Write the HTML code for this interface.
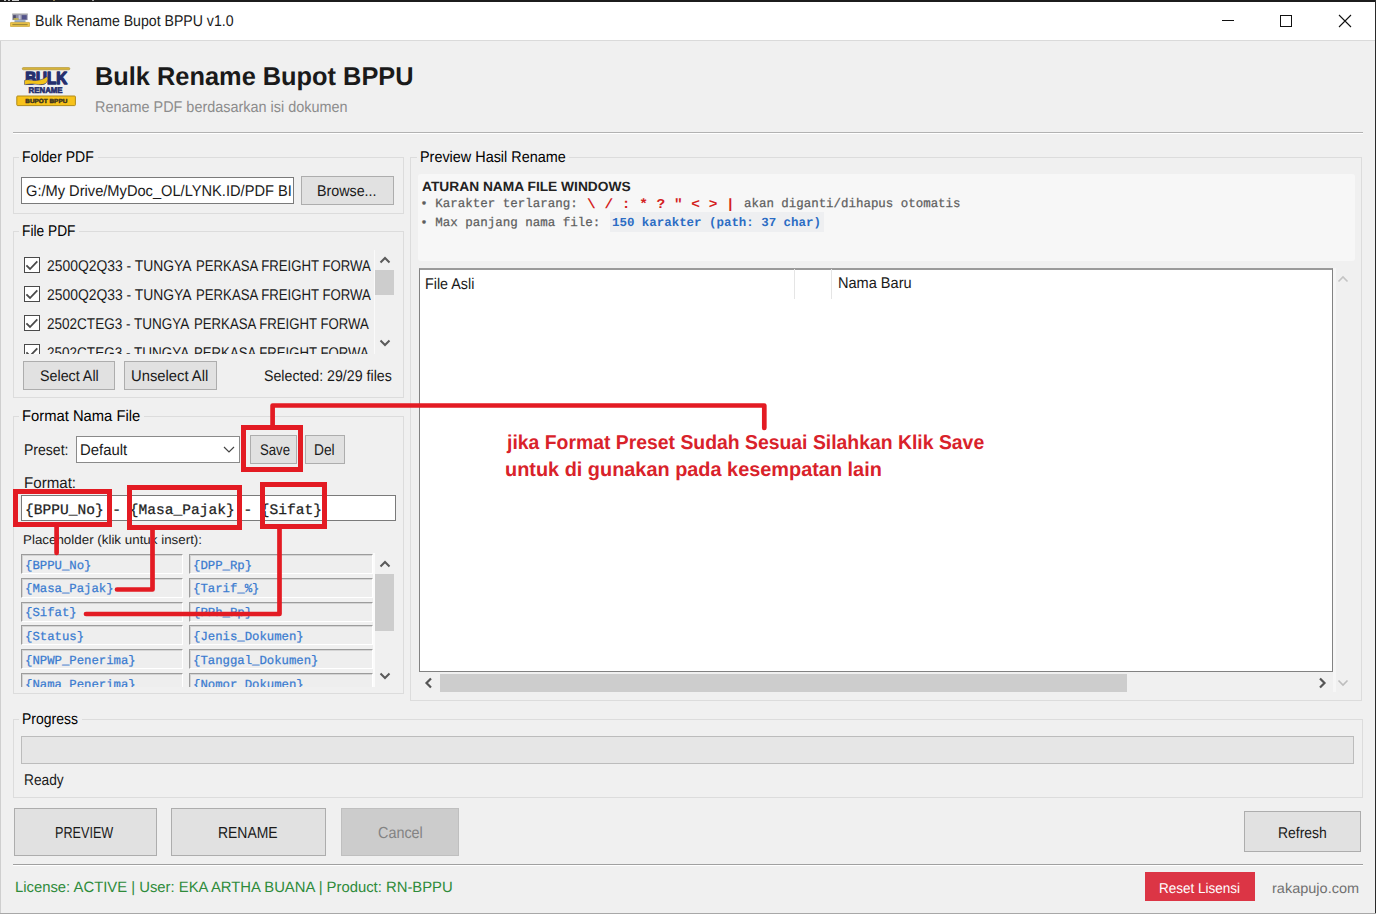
<!DOCTYPE html>
<html><head><meta charset="utf-8"><title>Bulk Rename Bupot BPPU v1.0</title>
<style>
html,body{margin:0;padding:0;}
body{width:1376px;height:914px;position:relative;overflow:hidden;background:#f0f0f0;font-family:'Liberation Sans',sans-serif;text-rendering:geometricPrecision;}
</style></head><body>
<div style="position:absolute;left:0px;top:0px;width:1376px;height:2px;background:#1c1c1c"></div>
<div style="position:absolute;left:4px;top:0px;width:2px;height:1px;background:#bdbdbd"></div>
<div style="position:absolute;left:8px;top:0px;width:2px;height:1px;background:#bdbdbd"></div>
<div style="position:absolute;left:12px;top:0px;width:7px;height:1px;background:#d0d0d0"></div>
<div style="position:absolute;left:53px;top:0px;width:2px;height:1px;background:#8a7a50"></div>
<div style="position:absolute;left:92px;top:0px;width:2px;height:1px;background:#9a9a9a"></div>
<div style="position:absolute;left:0px;top:2px;width:1376px;height:38px;background:#fff"></div>
<div style="position:absolute;left:0px;top:40px;width:1376px;height:1px;background:#dadada"></div>
<div style="position:absolute;left:0px;top:41px;width:1px;height:873px;background:#cfcfcf"></div>
<div style="position:absolute;left:1375px;top:0px;width:1px;height:914px;background:#2a2a2a"></div>
<div style="position:absolute;left:0px;top:913px;width:1376px;height:1px;background:#a8a8a8"></div>
<div style="position:absolute;left:35.09px;top:12px;font:normal 15.5px/20px 'Liberation Sans', sans-serif;color:#1a1a1a;white-space:nowrap"><span style="display:inline-block;transform:scale(0.9109,1.000);transform-origin:0 0;">Bulk Rename Bupot BPPU v1.0</span></div>
<div style="position:absolute;left:1222px;top:20px;width:12px;height:1px;background:#111"></div>
<div style="position:absolute;left:1280px;top:15px;width:10px;height:10px;border:1px solid #111"></div>
<svg style="position:absolute;left:1338px;top:14px" width="14" height="14" viewBox="0 0 14 14"><path d="M1 1 L13 13 M13 1 L1 13" stroke="#111" stroke-width="1.1"/></svg>
<div style="position:absolute;left:95.42px;top:60px;font:bold 25.8px/34px 'Liberation Sans', sans-serif;color:#1a1a1a;white-space:nowrap"><span style="display:inline-block;transform:scale(0.9835,1.000);transform-origin:0 0;">Bulk Rename Bupot BPPU</span></div>
<div style="position:absolute;left:95.07px;top:98px;font:normal 15.5px/20px 'Liberation Sans', sans-serif;color:#8c8c8c;white-space:nowrap"><span style="display:inline-block;transform:scale(0.9305,1.000);transform-origin:0 0;">Rename PDF berdasarkan isi dokumen</span></div>
<div style="position:absolute;left:13px;top:132px;width:1350px;height:1px;background:#b2b2b2"></div>
<div style="position:absolute;left:13px;top:133px;width:1350px;height:1px;background:#fff"></div>
<div style="position:absolute;left:13px;top:157px;width:391px;height:57px;border:1px solid #dcdcdc;box-sizing:border-box"></div>
<div style="position:absolute;left:19px;top:155px;width:78.5px;height:5px;background:#f0f0f0"></div>
<div style="position:absolute;left:22.09px;top:148px;font:normal 15.5px/20px 'Liberation Sans', sans-serif;color:#000;white-space:nowrap"><span style="display:inline-block;transform:scale(0.9065,1.000);transform-origin:0 0;">Folder PDF</span></div>
<div style="position:absolute;left:21px;top:177px;width:273px;height:27px;background:#fff;border:1px solid #7a7a7a;box-sizing:border-box"></div>
<div style="position:absolute;left:25.70px;top:182px;font:normal 15.5px/20px 'Liberation Sans', sans-serif;color:#1a1a1a;white-space:nowrap"><span style="display:inline-block;transform:scale(0.9449,1.000);transform-origin:0 0;">G:/My Drive/MyDoc_OL/LYNK.ID/PDF BI</span></div>
<div style="position:absolute;left:301px;top:176px;width:93px;height:29px;background:#e1e1e1;border:1px solid #adadad;box-sizing:border-box"></div>
<div style="position:absolute;left:317.38px;top:182px;font:normal 15.5px/20px 'Liberation Sans', sans-serif;color:#1a1a1a;white-space:nowrap"><span style="display:inline-block;transform:scale(0.9214,1.000);transform-origin:0 0;">Browse...</span></div>
<div style="position:absolute;left:13px;top:231px;width:391px;height:167px;border:1px solid #dcdcdc;box-sizing:border-box"></div>
<div style="position:absolute;left:18.8px;top:229px;width:60.2px;height:5px;background:#f0f0f0"></div>
<div style="position:absolute;left:21.91px;top:222px;font:normal 15.5px/20px 'Liberation Sans', sans-serif;color:#000;white-space:nowrap"><span style="display:inline-block;transform:scale(0.8875,1.000);transform-origin:0 0;">File PDF</span></div>
<div style="position:absolute;left:20px;top:250px;width:351px;height:104px;overflow:hidden">
<div style="position:absolute;left:4px;top:7px;width:16px;height:16px;box-sizing:border-box;border:1.4px solid #4a4a4a;background:#fff"></div>
<svg style="position:absolute;left:4px;top:7px" width="16" height="16" viewBox="0 0 16 16"><path d="M2.4 8.4 L6 12 L13.3 4.4" fill="none" stroke="#4a4a4a" stroke-width="1.8"/></svg>
<div style="position:absolute;left:26.50px;top:7px;font:normal 15.5px/20px 'Liberation Sans', sans-serif;color:#1a1a1a;white-space:nowrap"><span style="display:inline-block;transform:scale(0.8957,1.000);transform-origin:0 0;">2500Q2Q33 - TUNGYA</span></div>
<div style="position:absolute;left:176.05px;top:7px;font:normal 15.5px/20px 'Liberation Sans', sans-serif;color:#1a1a1a;white-space:nowrap"><span style="display:inline-block;transform:scale(0.8505,1.000);transform-origin:0 0;">PERKASA FREIGHT FORWA</span></div>
<div style="position:absolute;left:4px;top:36px;width:16px;height:16px;box-sizing:border-box;border:1.4px solid #4a4a4a;background:#fff"></div>
<svg style="position:absolute;left:4px;top:36px" width="16" height="16" viewBox="0 0 16 16"><path d="M2.4 8.4 L6 12 L13.3 4.4" fill="none" stroke="#4a4a4a" stroke-width="1.8"/></svg>
<div style="position:absolute;left:26.50px;top:36px;font:normal 15.5px/20px 'Liberation Sans', sans-serif;color:#1a1a1a;white-space:nowrap"><span style="display:inline-block;transform:scale(0.8957,1.000);transform-origin:0 0;">2500Q2Q33 - TUNGYA</span></div>
<div style="position:absolute;left:176.05px;top:36px;font:normal 15.5px/20px 'Liberation Sans', sans-serif;color:#1a1a1a;white-space:nowrap"><span style="display:inline-block;transform:scale(0.8505,1.000);transform-origin:0 0;">PERKASA FREIGHT FORWA</span></div>
<div style="position:absolute;left:4px;top:65px;width:16px;height:16px;box-sizing:border-box;border:1.4px solid #4a4a4a;background:#fff"></div>
<svg style="position:absolute;left:4px;top:65px" width="16" height="16" viewBox="0 0 16 16"><path d="M2.4 8.4 L6 12 L13.3 4.4" fill="none" stroke="#4a4a4a" stroke-width="1.8"/></svg>
<div style="position:absolute;left:26.50px;top:65px;font:normal 15.5px/20px 'Liberation Sans', sans-serif;color:#1a1a1a;white-space:nowrap"><span style="display:inline-block;transform:scale(0.8730,1.000);transform-origin:0 0;">2502CTEG3 - TUNGYA</span></div>
<div style="position:absolute;left:173.75px;top:65px;font:normal 15.5px/20px 'Liberation Sans', sans-serif;color:#1a1a1a;white-space:nowrap"><span style="display:inline-block;transform:scale(0.8505,1.000);transform-origin:0 0;">PERKASA FREIGHT FORWA</span></div>
<div style="position:absolute;left:4px;top:94px;width:16px;height:16px;box-sizing:border-box;border:1.4px solid #4a4a4a;background:#fff"></div>
<svg style="position:absolute;left:4px;top:94px" width="16" height="16" viewBox="0 0 16 16"><path d="M2.4 8.4 L6 12 L13.3 4.4" fill="none" stroke="#4a4a4a" stroke-width="1.8"/></svg>
<div style="position:absolute;left:26.50px;top:94px;font:normal 15.5px/20px 'Liberation Sans', sans-serif;color:#1a1a1a;white-space:nowrap"><span style="display:inline-block;transform:scale(0.8730,1.000);transform-origin:0 0;">2502CTEG3 - TUNGYA</span></div>
<div style="position:absolute;left:173.75px;top:94px;font:normal 15.5px/20px 'Liberation Sans', sans-serif;color:#1a1a1a;white-space:nowrap"><span style="display:inline-block;transform:scale(0.8505,1.000);transform-origin:0 0;">PERKASA FREIGHT FORWA</span></div>
</div>
<div style="position:absolute;left:374px;top:250px;width:1px;height:104px;background:#fafafa"></div>
<svg style="position:absolute;left:379px;top:255px" width="12" height="10" viewBox="0 0 12 10"><path d="M1.5 7.5 L6 3 L10.5 7.5" fill="none" stroke="#5a5a5a" stroke-width="2"/></svg>
<div style="position:absolute;left:375px;top:270px;width:19px;height:25px;background:#cdcdcd"></div>
<svg style="position:absolute;left:379px;top:338px" width="12" height="10" viewBox="0 0 12 10"><path d="M1.5 2.5 L6 7 L10.5 2.5" fill="none" stroke="#5a5a5a" stroke-width="2"/></svg>
<div style="position:absolute;left:23px;top:361px;width:92px;height:29px;background:#e1e1e1;border:1px solid #adadad;box-sizing:border-box"></div>
<div style="position:absolute;left:39.60px;top:367px;font:normal 15.5px/20px 'Liberation Sans', sans-serif;color:#1a1a1a;white-space:nowrap"><span style="display:inline-block;transform:scale(0.9210,1.000);transform-origin:0 0;">Select All</span></div>
<div style="position:absolute;left:124px;top:361px;width:93px;height:29px;background:#e1e1e1;border:1px solid #adadad;box-sizing:border-box"></div>
<div style="position:absolute;left:130.85px;top:367px;font:normal 15.5px/20px 'Liberation Sans', sans-serif;color:#1a1a1a;white-space:nowrap"><span style="display:inline-block;transform:scale(0.9541,1.000);transform-origin:0 0;">Unselect All</span></div>
<div style="position:absolute;left:264.30px;top:367px;font:normal 15.5px/20px 'Liberation Sans', sans-serif;color:#1a1a1a;white-space:nowrap"><span style="display:inline-block;transform:scale(0.9153,1.000);transform-origin:0 0;">Selected: 29/29 files</span></div>
<div style="position:absolute;left:13px;top:416px;width:391px;height:278px;border:1px solid #dcdcdc;box-sizing:border-box"></div>
<div style="position:absolute;left:19.3px;top:414px;width:124.7px;height:5px;background:#f0f0f0"></div>
<div style="position:absolute;left:22.35px;top:407px;font:normal 15.5px/20px 'Liberation Sans', sans-serif;color:#000;white-space:nowrap"><span style="display:inline-block;transform:scale(0.9534,1.000);transform-origin:0 0;">Format Nama File</span></div>
<div style="position:absolute;left:23.59px;top:441px;font:normal 15.5px/20px 'Liberation Sans', sans-serif;color:#1a1a1a;white-space:nowrap"><span style="display:inline-block;transform:scale(0.9060,1.000);transform-origin:0 0;">Preset:</span></div>
<div style="position:absolute;left:76px;top:436px;width:164px;height:27px;background:#fff;border:1px solid #8a8a8a;box-sizing:border-box"></div>
<div style="position:absolute;left:79.64px;top:441px;font:normal 15.5px/20px 'Liberation Sans', sans-serif;color:#1a1a1a;white-space:nowrap"><span style="display:inline-block;transform:scale(0.9589,1.000);transform-origin:0 0;">Default</span></div>
<svg style="position:absolute;left:222px;top:444px" width="14" height="12" viewBox="0 0 14 12"><path d="M2 3 L7 8 L12 3" fill="none" stroke="#444" stroke-width="1.2"/></svg>
<div style="position:absolute;left:250px;top:435px;width:47px;height:29px;background:#e1e1e1;border:1px solid #adadad;box-sizing:border-box"></div>
<div style="position:absolute;left:259.50px;top:441px;font:normal 15.5px/20px 'Liberation Sans', sans-serif;color:#1a1a1a;white-space:nowrap"><span style="display:inline-block;transform:scale(0.8499,1.000);transform-origin:0 0;">Save</span></div>
<div style="position:absolute;left:305px;top:435px;width:40px;height:29px;background:#e1e1e1;border:1px solid #adadad;box-sizing:border-box"></div>
<div style="position:absolute;left:314.01px;top:441px;font:normal 15.5px/20px 'Liberation Sans', sans-serif;color:#1a1a1a;white-space:nowrap"><span style="display:inline-block;transform:scale(0.8893,1.000);transform-origin:0 0;">Del</span></div>
<div style="position:absolute;left:23.53px;top:474px;font:normal 15.5px/20px 'Liberation Sans', sans-serif;color:#1a1a1a;white-space:nowrap"><span style="display:inline-block;transform:scale(0.9748,1.000);transform-origin:0 0;">Format:</span></div>
<div style="position:absolute;left:21px;top:495px;width:375px;height:26px;background:#fff;border:1px solid #7a7a7a;box-sizing:border-box"></div>
<div style="position:absolute;left:25.00px;top:502px;-webkit-text-stroke:0.25px currentColor;font:normal 14.5px/19px 'Liberation Mono', monospace;color:#222;white-space:nowrap"><span style="display:inline-block;transform:scale(1.0039,1.000);transform-origin:0 0;">{BPPU_No} - {Masa_Pajak} - {Sifat}</span></div>
<div style="position:absolute;left:23.36px;top:531px;font:normal 12.8px/17px 'Liberation Sans', sans-serif;color:#222;white-space:nowrap"><span style="display:inline-block;transform:scale(1.0444,1.000);transform-origin:0 0;">Placeholder (klik untuk insert):</span></div>
<div style="position:absolute;left:0px;top:550px;width:374px;height:137px;overflow:hidden">
<div style="position:absolute;left:21px;top:4.0px;width:162px;height:20px;box-sizing:border-box;background:#eeeeee;border-top:1px solid #9c9c9c;border-left:1px solid #9c9c9c;border-right:1px solid #fff;border-bottom:1px solid #fff;box-shadow:inset 1px 1px 0 #d4d4d4"></div>
<div style="position:absolute;left:25.00px;top:8px;-webkit-text-stroke:0.25px currentColor;font:normal 12.3px/16px 'Liberation Mono', monospace;color:#3a7bd0;white-space:nowrap"><span style="display:inline-block;">{BPPU_No}</span></div>
<div style="position:absolute;left:189px;top:4.0px;width:184px;height:20px;box-sizing:border-box;background:#eeeeee;border-top:1px solid #9c9c9c;border-left:1px solid #9c9c9c;border-right:1px solid #fff;border-bottom:1px solid #fff;box-shadow:inset 1px 1px 0 #d4d4d4"></div>
<div style="position:absolute;left:193.00px;top:8px;-webkit-text-stroke:0.25px currentColor;font:normal 12.3px/16px 'Liberation Mono', monospace;color:#3a7bd0;white-space:nowrap"><span style="display:inline-block;">{DPP_Rp}</span></div>
<div style="position:absolute;left:21px;top:27.8px;width:162px;height:20px;box-sizing:border-box;background:#eeeeee;border-top:1px solid #9c9c9c;border-left:1px solid #9c9c9c;border-right:1px solid #fff;border-bottom:1px solid #fff;box-shadow:inset 1px 1px 0 #d4d4d4"></div>
<div style="position:absolute;left:25.00px;top:31px;-webkit-text-stroke:0.25px currentColor;font:normal 12.3px/16px 'Liberation Mono', monospace;color:#3a7bd0;white-space:nowrap"><span style="display:inline-block;">{Masa_Pajak}</span></div>
<div style="position:absolute;left:189px;top:27.8px;width:184px;height:20px;box-sizing:border-box;background:#eeeeee;border-top:1px solid #9c9c9c;border-left:1px solid #9c9c9c;border-right:1px solid #fff;border-bottom:1px solid #fff;box-shadow:inset 1px 1px 0 #d4d4d4"></div>
<div style="position:absolute;left:193.00px;top:31px;-webkit-text-stroke:0.25px currentColor;font:normal 12.3px/16px 'Liberation Mono', monospace;color:#3a7bd0;white-space:nowrap"><span style="display:inline-block;">{Tarif_%}</span></div>
<div style="position:absolute;left:21px;top:51.6px;width:162px;height:20px;box-sizing:border-box;background:#eeeeee;border-top:1px solid #9c9c9c;border-left:1px solid #9c9c9c;border-right:1px solid #fff;border-bottom:1px solid #fff;box-shadow:inset 1px 1px 0 #d4d4d4"></div>
<div style="position:absolute;left:25.00px;top:55px;-webkit-text-stroke:0.25px currentColor;font:normal 12.3px/16px 'Liberation Mono', monospace;color:#3a7bd0;white-space:nowrap"><span style="display:inline-block;">{Sifat}</span></div>
<div style="position:absolute;left:189px;top:51.6px;width:184px;height:20px;box-sizing:border-box;background:#eeeeee;border-top:1px solid #9c9c9c;border-left:1px solid #9c9c9c;border-right:1px solid #fff;border-bottom:1px solid #fff;box-shadow:inset 1px 1px 0 #d4d4d4"></div>
<div style="position:absolute;left:193.00px;top:55px;-webkit-text-stroke:0.25px currentColor;font:normal 12.3px/16px 'Liberation Mono', monospace;color:#3a7bd0;white-space:nowrap"><span style="display:inline-block;">{PPh_Rp}</span></div>
<div style="position:absolute;left:21px;top:75.4px;width:162px;height:20px;box-sizing:border-box;background:#eeeeee;border-top:1px solid #9c9c9c;border-left:1px solid #9c9c9c;border-right:1px solid #fff;border-bottom:1px solid #fff;box-shadow:inset 1px 1px 0 #d4d4d4"></div>
<div style="position:absolute;left:25.00px;top:79px;-webkit-text-stroke:0.25px currentColor;font:normal 12.3px/16px 'Liberation Mono', monospace;color:#3a7bd0;white-space:nowrap"><span style="display:inline-block;">{Status}</span></div>
<div style="position:absolute;left:189px;top:75.4px;width:184px;height:20px;box-sizing:border-box;background:#eeeeee;border-top:1px solid #9c9c9c;border-left:1px solid #9c9c9c;border-right:1px solid #fff;border-bottom:1px solid #fff;box-shadow:inset 1px 1px 0 #d4d4d4"></div>
<div style="position:absolute;left:193.00px;top:79px;-webkit-text-stroke:0.25px currentColor;font:normal 12.3px/16px 'Liberation Mono', monospace;color:#3a7bd0;white-space:nowrap"><span style="display:inline-block;">{Jenis_Dokumen}</span></div>
<div style="position:absolute;left:21px;top:99.2px;width:162px;height:20px;box-sizing:border-box;background:#eeeeee;border-top:1px solid #9c9c9c;border-left:1px solid #9c9c9c;border-right:1px solid #fff;border-bottom:1px solid #fff;box-shadow:inset 1px 1px 0 #d4d4d4"></div>
<div style="position:absolute;left:25.00px;top:103px;-webkit-text-stroke:0.25px currentColor;font:normal 12.3px/16px 'Liberation Mono', monospace;color:#3a7bd0;white-space:nowrap"><span style="display:inline-block;">{NPWP_Penerima}</span></div>
<div style="position:absolute;left:189px;top:99.2px;width:184px;height:20px;box-sizing:border-box;background:#eeeeee;border-top:1px solid #9c9c9c;border-left:1px solid #9c9c9c;border-right:1px solid #fff;border-bottom:1px solid #fff;box-shadow:inset 1px 1px 0 #d4d4d4"></div>
<div style="position:absolute;left:193.00px;top:103px;-webkit-text-stroke:0.25px currentColor;font:normal 12.3px/16px 'Liberation Mono', monospace;color:#3a7bd0;white-space:nowrap"><span style="display:inline-block;">{Tanggal_Dokumen}</span></div>
<div style="position:absolute;left:21px;top:123.0px;width:162px;height:20px;box-sizing:border-box;background:#eeeeee;border-top:1px solid #9c9c9c;border-left:1px solid #9c9c9c;border-right:1px solid #fff;border-bottom:1px solid #fff;box-shadow:inset 1px 1px 0 #d4d4d4"></div>
<div style="position:absolute;left:25.00px;top:127px;-webkit-text-stroke:0.25px currentColor;font:normal 12.3px/16px 'Liberation Mono', monospace;color:#3a7bd0;white-space:nowrap"><span style="display:inline-block;">{Nama_Penerima}</span></div>
<div style="position:absolute;left:189px;top:123.0px;width:184px;height:20px;box-sizing:border-box;background:#eeeeee;border-top:1px solid #9c9c9c;border-left:1px solid #9c9c9c;border-right:1px solid #fff;border-bottom:1px solid #fff;box-shadow:inset 1px 1px 0 #d4d4d4"></div>
<div style="position:absolute;left:193.00px;top:127px;-webkit-text-stroke:0.25px currentColor;font:normal 12.3px/16px 'Liberation Mono', monospace;color:#3a7bd0;white-space:nowrap"><span style="display:inline-block;">{Nomor_Dokumen}</span></div>
</div>
<div style="position:absolute;left:373px;top:553px;width:2px;height:134px;background:#fbfbfb"></div>
<svg style="position:absolute;left:379px;top:559px" width="12" height="10" viewBox="0 0 12 10"><path d="M1.5 7.5 L6 3 L10.5 7.5" fill="none" stroke="#5a5a5a" stroke-width="2"/></svg>
<div style="position:absolute;left:375px;top:574px;width:19px;height:57px;background:#cdcdcd"></div>
<svg style="position:absolute;left:379px;top:671px" width="12" height="10" viewBox="0 0 12 10"><path d="M1.5 2.5 L6 7 L10.5 2.5" fill="none" stroke="#5a5a5a" stroke-width="2"/></svg>
<div style="position:absolute;left:410px;top:157px;width:952px;height:544px;border:1px solid #dcdcdc;box-sizing:border-box"></div>
<div style="position:absolute;left:416.6px;top:155px;width:152.2px;height:5px;background:#f0f0f0"></div>
<div style="position:absolute;left:419.67px;top:148px;font:normal 15.5px/20px 'Liberation Sans', sans-serif;color:#000;white-space:nowrap"><span style="display:inline-block;transform:scale(0.9294,1.000);transform-origin:0 0;">Preview Hasil Rename</span></div>
<div style="position:absolute;left:418px;top:174px;width:937px;height:87px;background:#f7f7f7;border-radius:3px"></div>
<div style="position:absolute;left:421.50px;top:178px;font:bold 13.3px/17px 'Liberation Sans', sans-serif;color:#222;white-space:nowrap"><span style="display:inline-block;transform:scale(1.0348,1.000);transform-origin:0 0;">ATURAN NAMA FILE WINDOWS</span></div>
<div style="position:absolute;left:420.30px;top:196px;-webkit-text-stroke:0.25px currentColor;font:normal 12.5px/16px 'Liberation Mono', monospace;color:#5e5e5e;white-space:nowrap"><span style="display:inline-block;">• Karakter terlarang:</span></div>
<div style="position:absolute;left:587.30px;top:197px;font:bold 13.5px/18px 'Liberation Mono', monospace;color:#d42020;white-space:nowrap"><span style="display:inline-block;transform:scale(1.0726,1.000);transform-origin:0 0;">\ / : * ? " &lt; &gt; |</span></div>
<div style="position:absolute;left:743.50px;top:196px;-webkit-text-stroke:0.25px currentColor;font:normal 12.5px/16px 'Liberation Mono', monospace;color:#5e5e5e;white-space:nowrap"><span style="display:inline-block;transform:scale(0.9952,1.000);transform-origin:0 0;">akan diganti/dihapus otomatis</span></div>
<div style="position:absolute;left:420.30px;top:215px;-webkit-text-stroke:0.25px currentColor;font:normal 12.5px/16px 'Liberation Mono', monospace;color:#5e5e5e;white-space:nowrap"><span style="display:inline-block;">• Max panjang nama file:</span></div>
<div style="position:absolute;left:610px;top:212px;width:214px;height:20px;background:#eeeff1"></div>
<div style="position:absolute;left:612.30px;top:215px;font:bold 12.35px/16px 'Liberation Mono', monospace;color:#2b6cc4;white-space:nowrap"><span style="display:inline-block;transform:scale(1.0073,1.000);transform-origin:0 0;">150 karakter (path: 37 char)</span></div>
<div style="position:absolute;left:419px;top:268px;width:914px;height:404px;background:#fff;border:1px solid #828282;border-top:2px solid #9a9a9a;box-sizing:border-box"></div>
<div style="position:absolute;left:1333px;top:268px;width:3px;height:424px;background:#f6f6f6"></div>
<div style="position:absolute;left:794px;top:269px;width:1px;height:30px;background:#e5e5e5"></div>
<div style="position:absolute;left:831px;top:269px;width:1px;height:30px;background:#e5e5e5"></div>
<div style="position:absolute;left:424.78px;top:275px;font:normal 15.5px/20px 'Liberation Sans', sans-serif;color:#1a1a1a;white-space:nowrap"><span style="display:inline-block;transform:scale(0.9240,1.000);transform-origin:0 0;">File Asli</span></div>
<div style="position:absolute;left:837.66px;top:274px;font:normal 15.5px/20px 'Liberation Sans', sans-serif;color:#1a1a1a;white-space:nowrap"><span style="display:inline-block;transform:scale(0.9391,1.000);transform-origin:0 0;">Nama Baru</span></div>
<svg style="position:absolute;left:1337px;top:274px" width="12" height="10" viewBox="0 0 12 10"><path d="M1.5 7.5 L6 3 L10.5 7.5" fill="none" stroke="#c4c4c4" stroke-width="1.6"/></svg>
<svg style="position:absolute;left:1337px;top:678px" width="12" height="10" viewBox="0 0 12 10"><path d="M1.5 2.5 L6 7 L10.5 2.5" fill="none" stroke="#bdbdbd" stroke-width="1.6"/></svg>
<div style="position:absolute;left:440px;top:674px;width:687px;height:18px;background:#cdcdcd"></div>
<svg style="position:absolute;left:423px;top:677px" width="12" height="12" viewBox="0 0 12 12"><path d="M8 1.5 L3.5 6 L8 10.5" fill="none" stroke="#555" stroke-width="2.2"/></svg>
<svg style="position:absolute;left:1316px;top:677px" width="12" height="12" viewBox="0 0 12 12"><path d="M4 1.5 L8.5 6 L4 10.5" fill="none" stroke="#555" stroke-width="2.2"/></svg>
<div style="position:absolute;left:13px;top:719px;width:1350px;height:79px;border:1px solid #dcdcdc;box-sizing:border-box"></div>
<div style="position:absolute;left:19px;top:717px;width:63.3px;height:5px;background:#f0f0f0"></div>
<div style="position:absolute;left:22.10px;top:710px;font:normal 15.5px/20px 'Liberation Sans', sans-serif;color:#000;white-space:nowrap"><span style="display:inline-block;transform:scale(0.9025,1.000);transform-origin:0 0;">Progress</span></div>
<div style="position:absolute;left:21px;top:736px;width:1333px;height:28px;background:#e6e6e6;border:1px solid #bcbcbc;box-sizing:border-box"></div>
<div style="position:absolute;left:23.61px;top:771px;font:normal 15.5px/20px 'Liberation Sans', sans-serif;color:#1a1a1a;white-space:nowrap"><span style="display:inline-block;transform:scale(0.8853,1.000);transform-origin:0 0;">Ready</span></div>
<div style="position:absolute;left:14px;top:808px;width:143px;height:48px;background:#e1e1e1;border:1px solid #adadad;box-sizing:border-box"></div>
<div style="position:absolute;left:54.61px;top:823px;font:normal 16px/21px 'Liberation Sans', sans-serif;color:#1a1a1a;white-space:nowrap"><span style="display:inline-block;transform:scale(0.7898,1.000);transform-origin:0 0;">PREVIEW</span></div>
<div style="position:absolute;left:171px;top:808px;width:155px;height:48px;background:#e1e1e1;border:1px solid #adadad;box-sizing:border-box"></div>
<div style="position:absolute;left:218.23px;top:823px;font:normal 16px/21px 'Liberation Sans', sans-serif;color:#1a1a1a;white-space:nowrap"><span style="display:inline-block;transform:scale(0.8715,1.000);transform-origin:0 0;">RENAME</span></div>
<div style="position:absolute;left:341px;top:808px;width:118px;height:48px;background:#cccccc;border:1px solid #bfbfbf;box-sizing:border-box"></div>
<div style="position:absolute;left:377.90px;top:823px;font:normal 16px/21px 'Liberation Sans', sans-serif;color:#838383;white-space:nowrap"><span style="display:inline-block;transform:scale(0.8995,1.000);transform-origin:0 0;">Cancel</span></div>
<div style="position:absolute;left:1244px;top:811px;width:117px;height:41px;background:#e1e1e1;border:1px solid #adadad;box-sizing:border-box"></div>
<div style="position:absolute;left:1277.50px;top:824px;font:normal 15.5px/20px 'Liberation Sans', sans-serif;color:#1a1a1a;white-space:nowrap"><span style="display:inline-block;transform:scale(0.9002,1.000);transform-origin:0 0;">Refresh</span></div>
<div style="position:absolute;left:13px;top:864px;width:1350px;height:1px;background:#a0a0a0"></div>
<div style="position:absolute;left:13px;top:865px;width:1350px;height:1px;background:#fff"></div>
<div style="position:absolute;left:14.51px;top:878px;font:normal 15px/20px 'Liberation Sans', sans-serif;color:#2e8b3a;white-space:nowrap"><span style="display:inline-block;transform:scale(0.9888,1.000);transform-origin:0 0;">License: ACTIVE | User: EKA ARTHA BUANA | Product: RN-BPPU</span></div>
<div style="position:absolute;left:1145px;top:872px;width:110px;height:29px;background:#dc3545"></div>
<div style="position:absolute;left:1158.55px;top:880px;font:normal 14.3px/19px 'Liberation Sans', sans-serif;color:#fff;white-space:nowrap"><span style="display:inline-block;transform:scale(0.9451,1.000);transform-origin:0 0;">Reset Lisensi</span></div>
<div style="position:absolute;left:1272.10px;top:879px;font:normal 14px/18px 'Liberation Sans', sans-serif;color:#707070;white-space:nowrap"><span style="display:inline-block;transform:scale(1.0362,1.000);transform-origin:0 0;">rakapujo.com</span></div>
<svg style="position:absolute;left:14px;top:64px" width="64" height="44" viewBox="0 0 64 44">
<rect x="8.3" y="3.6" width="47.5" height="2.2" rx="1" fill="#d9b53a" stroke="#a8892a" stroke-width="0.6"/>
<text x="32.2" y="20.3" text-anchor="middle" font-family="Liberation Sans" font-weight="bold" font-size="17.5" fill="#262f6e" stroke="#262f6e" stroke-width="1.5" stroke-linejoin="round" textLength="42" lengthAdjust="spacingAndGlyphs">BULK</text>
<path d="M10.5 16.5 C14 14.5 18 17 22 16.5 C27 16 30 15 33 12.5 C34.5 14 34 17.5 31.5 19.5 C27.5 21.8 22 20 18 20 C14 20 12 21 10.5 20.5 Z" fill="#f2c21b" stroke="#262f6e" stroke-width="0.5"/>
<text x="31.6" y="29.2" text-anchor="middle" font-family="Liberation Sans" font-weight="bold" font-size="8.2" fill="#262f6e" stroke="#262f6e" stroke-width="0.6" textLength="34" lengthAdjust="spacingAndGlyphs">RENAME</text>
<rect x="2.8" y="32" width="58.6" height="9.6" rx="0.8" fill="#f7c21a" stroke="#b08a1a" stroke-width="1"/>
<text x="32.3" y="38.6" text-anchor="middle" font-family="Liberation Sans" font-weight="bold" font-size="6" fill="#3a3320" stroke="#3a3320" stroke-width="0.45" textLength="42" lengthAdjust="spacingAndGlyphs">BUPOT BPPU</text>
</svg>
<svg style="position:absolute;left:10px;top:13px" width="20" height="14" viewBox="0 0 20 14">
<rect x="2.2" y="0.6" width="15.6" height="1" fill="#8a8a8a"/>
<rect x="2.4" y="1.5" width="15.2" height="5.6" fill="#8a8aa2"/>
<rect x="3.2" y="2.2" width="2.6" height="4.2" fill="#4d4d6c"/>
<rect x="8.6" y="2.2" width="2" height="4.2" fill="#c8c8e0"/>
<rect x="12" y="2.2" width="4.6" height="4.2" fill="#52528a"/>
<rect x="3.5" y="5.2" width="5" height="1.6" fill="#c8b850"/>
<rect x="4.5" y="7.2" width="11" height="2" fill="#8ea4bc"/>
<rect x="0.4" y="9.4" width="19.2" height="4.2" rx="0.6" fill="#ecc446" stroke="#c9a030" stroke-width="0.7"/>
<rect x="2.4" y="10.9" width="15.2" height="1.3" fill="#a08a38"/>
</svg>
<div style="position:absolute;left:241px;top:425px;width:62px;height:47px;border:5px solid #e31b23;box-sizing:border-box"></div>
<div style="position:absolute;left:13px;top:489px;width:99px;height:38px;border:5px solid #e31b23;box-sizing:border-box"></div>
<div style="position:absolute;left:127px;top:485px;width:115px;height:45px;border:5px solid #e31b23;box-sizing:border-box"></div>
<div style="position:absolute;left:260px;top:482px;width:67px;height:47px;border:5px solid #e31b23;box-sizing:border-box"></div>
<svg style="position:absolute;left:0;top:0" width="1376" height="914" viewBox="0 0 1376 914">
<g fill="none" stroke="#e31b23" stroke-width="4.7" stroke-linecap="round" stroke-linejoin="round">
<path d="M272.6 425 L272.6 405.5 L764.3 405.5 L764.3 428"/>
<path d="M56.6 527 L56.6 553"/>
<path d="M117 589.5 L152.5 589.5 L152.5 530"/>
<path d="M86 614 L279.5 614 L279.5 529"/>
</g></svg>
<div style="position:absolute;left:506.87px;top:430px;font:bold 20px/26px 'Liberation Sans', sans-serif;color:#d9222a;white-space:nowrap"><span style="display:inline-block;transform:scale(0.9690,1.000);transform-origin:0 0;">jika Format Preset Sudah Sesuai Silahkan Klik Save</span></div>
<div style="position:absolute;left:504.91px;top:457px;font:bold 20px/26px 'Liberation Sans', sans-serif;color:#d9222a;white-space:nowrap"><span style="display:inline-block;transform:scale(0.9943,1.000);transform-origin:0 0;">untuk di gunakan pada kesempatan lain</span></div>
</body></html>
